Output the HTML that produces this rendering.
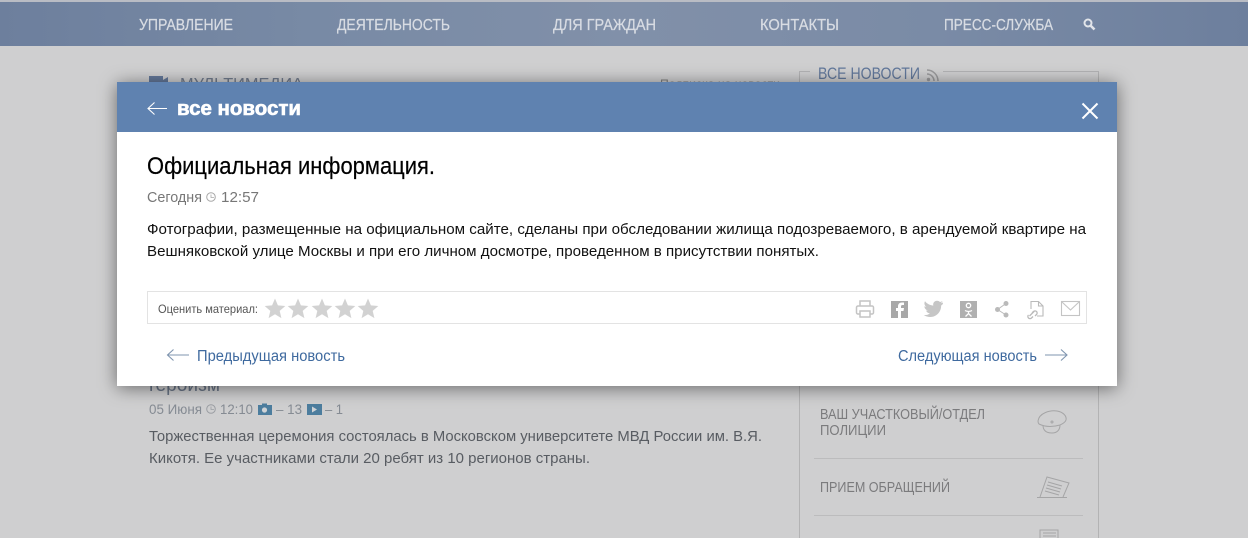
<!DOCTYPE html>
<html lang="ru"><head><meta charset="utf-8"><title>Официальная информация</title>
<style>
html,body{margin:0;padding:0;width:1248px;height:538px;overflow:hidden;background:#cfcfd0}
svg{display:block}
text{font-family:"Liberation Sans","DejaVu Sans",sans-serif}
</style></head><body>
<svg width="1248" height="538" viewBox="0 0 1248 538" xmlns="http://www.w3.org/2000/svg">
<defs>
<linearGradient id="nav" x1="0" x2="1" y1="0" y2="0">
<stop offset="0" stop-color="#6d7f9d"/><stop offset=".25" stop-color="#788aa5"/><stop offset=".5" stop-color="#8190a9"/><stop offset=".75" stop-color="#7a8ba6"/><stop offset="1" stop-color="#6d7f9d"/>
</linearGradient>
<filter id="sh" x="-5%" y="-15%" width="110%" height="130%"><feGaussianBlur stdDeviation="9"/></filter>
</defs>
<rect width="1248" height="538" fill="#cfcfd0"/>
<rect width="1248" height="2" fill="#b9bcc4"/>
<rect y="2" width="1248" height="44" fill="url(#nav)"/>
<g font-size="16" fill="#d8dce3" stroke="#d8dce3" stroke-width=".25">
<text x="139" y="30" textLength="94" lengthAdjust="spacingAndGlyphs">УПРАВЛЕНИЕ</text>
<text x="337" y="30" textLength="113" lengthAdjust="spacingAndGlyphs">ДЕЯТЕЛЬНОСТЬ</text>
<text x="553" y="30" textLength="103" lengthAdjust="spacingAndGlyphs">ДЛЯ ГРАЖДАН</text>
<text x="760" y="30" textLength="79" lengthAdjust="spacingAndGlyphs">КОНТАКТЫ</text>
<text x="944" y="30" textLength="109" lengthAdjust="spacingAndGlyphs">ПРЕСС-СЛУЖБА</text>
</g>
<circle cx="1088" cy="23" r="3.500" fill="none" stroke="#e2e5ea" stroke-width="2"/>
<path d="M1090.500 25.500l4 4" stroke="#e2e5ea" stroke-width="2.600"/>

<!-- background page -->
<rect x="149" y="76" width="14" height="12" fill="#64789a"/><path d="M163 80l5-3v10l-5-3z" fill="#64789a"/>
<text x="180" y="89" font-size="16" fill="#707a8c" textLength="123" lengthAdjust="spacingAndGlyphs">МУЛЬТИМЕДИА</text>
<text x="660" y="88" font-size="12" fill="#808080" textLength="120" lengthAdjust="spacingAndGlyphs">Подписка на новости</text>
<path d="M810 71.500H799.500V538M943 71.500H1098.500V538" fill="none" stroke="#b3b3b4"/>
<text x="818" y="79" font-size="16.500" fill="#62789b" textLength="102" lengthAdjust="spacingAndGlyphs">ВСЕ НОВОСТИ</text>
<g fill="none" stroke="#9a9a9c" stroke-width="1.500"><path d="M927 70a11 11 0 0 1 11 11M927 74a7 7 0 0 1 7 7"/></g><circle cx="928.500" cy="79.500" r="1.700" fill="#9a9a9c"/>

<text x="149" y="391" font-size="20" fill="#687486" textLength="71" lengthAdjust="spacingAndGlyphs">героизм</text>
<g font-size="14" fill="#858b93">
<text x="149" y="414" textLength="53" lengthAdjust="spacingAndGlyphs">05 Июня</text>
<text x="220" y="414" textLength="33" lengthAdjust="spacingAndGlyphs">12:10</text>
<text x="276" y="414" textLength="26" lengthAdjust="spacingAndGlyphs">– 13</text>
<text x="325" y="414" textLength="18" lengthAdjust="spacingAndGlyphs">– 1</text>
</g>
<circle cx="211" cy="409" r="4.300" fill="none" stroke="#9b9ea3"/><path d="M211 406.500V409.500H214" fill="none" stroke="#9b9ea3" stroke-width=".8"/>
<rect x="258" y="405" width="14" height="10" fill="#4c7d9e"/><rect x="262" y="403.500" width="5" height="2" fill="#4c7d9e"/><circle cx="264.500" cy="410" r="2.600" fill="#cfd3d6"/>
<rect x="307" y="404" width="15" height="11" fill="#4c7d9e"/><path d="M312 406.500l5 3-5 3z" fill="#cfd3d6"/>
<g font-size="15" fill="#585c62">
<text x="149" y="441" textLength="613" lengthAdjust="spacingAndGlyphs">Торжественная церемония состоялась в Московском университете МВД России им. В.Я.</text>
<text x="149" y="463" textLength="441" lengthAdjust="spacingAndGlyphs">Кикотя. Ее участниками стали 20 ребят из 10 регионов страны.</text>
</g>
<g font-size="14.500" fill="#7b7b7d">
<text x="820" y="419" textLength="165" lengthAdjust="spacingAndGlyphs">ВАШ УЧАСТКОВЫЙ/ОТДЕЛ</text>
<text x="820" y="435" textLength="66" lengthAdjust="spacingAndGlyphs">ПОЛИЦИИ</text>
<text x="820" y="492" textLength="130" lengthAdjust="spacingAndGlyphs">ПРИЕМ ОБРАЩЕНИЙ</text>
</g>
<path d="M814 458.500H1083M814 515.500H1083" stroke="#bcbcbd"/>
<g fill="none" stroke="#a5a5a6">
<path d="M1038 421c1-8 12-11 19-10 6 1 10 5 9 9-1 3-4 4-6 5-7 2-15 2-21-1-1-1-1-2-1-3z"/>
<path d="M1043 425c0 5 3 8 9 8 5 0 8-3 8-8"/>
<circle cx="1052" cy="422" r="1"/>
<path d="M1037 497.500H1067M1040 497l7-20 22 6-6 14M1048 482l14 4M1047 485l14 4M1046 488l14 4M1045 491l14 4"/>
<path d="M1040 538V530H1058V538M1043 533H1056M1043 536H1056"/>
</g>

<!-- modal -->
<rect x="117" y="84" width="1000" height="304" fill="#000" fill-opacity=".5" filter="url(#sh)"/>
<rect x="117" y="82" width="1000" height="304" fill="#fff"/>
<rect x="117" y="82" width="1000" height="50" fill="#5f82b0"/>
<path d="M167 108.500H148M154.500 102.500L148 108.500L154.500 114.500" fill="none" stroke="#fff" stroke-width="1.100"/>
<text x="177" y="115" font-size="20" font-weight="700" fill="#fff" stroke="#fff" stroke-width=".6" textLength="124" lengthAdjust="spacingAndGlyphs">все новости</text>
<path d="M1082.500 103.500L1097.500 118.500M1097.500 103.500L1082.500 118.500" stroke="#fff" stroke-width="2"/>

<text x="147" y="174" font-size="24" fill="#000" stroke="#000" stroke-width=".2" textLength="288" lengthAdjust="spacingAndGlyphs">Официальная информация.</text>
<text x="147" y="202" font-size="15" fill="#777" textLength="55" lengthAdjust="spacingAndGlyphs">Сегодня</text>
<circle cx="211" cy="197" r="4.300" fill="none" stroke="#a8a8a8"/><path d="M211 194.500V197.500H214" fill="none" stroke="#a8a8a8" stroke-width=".8"/>
<text x="221" y="202" font-size="15" fill="#777" textLength="38" lengthAdjust="spacingAndGlyphs">12:57</text>
<g font-size="15" fill="#111">
<text x="147" y="234" textLength="939" lengthAdjust="spacingAndGlyphs">Фотографии, размещенные на официальном сайте, сделаны при обследовании жилища подозреваемого, в арендуемой квартире на</text>
<text x="147" y="256" textLength="672" lengthAdjust="spacingAndGlyphs">Вешняковской улице Москвы и при его личном досмотре, проведенном в присутствии понятых.</text>
</g>

<rect x="147.500" y="291.500" width="939" height="32" fill="#fff" stroke="#e3e3e3"/>
<text x="158" y="313" font-size="12" fill="#555" textLength="100" lengthAdjust="spacingAndGlyphs">Оценить материал:</text>
<g fill="#d2d2d2">
<path transform="translate(-.5 0)" d="M275.500 298.500l2.900 6.900 7.400.6-5.600 4.900 1.700 7.200-6.400-3.900-6.400 3.900 1.700-7.200-5.600-4.900 7.400-.6z"/>
<path transform="translate(22.500 0)" d="M275.500 298.500l2.900 6.900 7.400.6-5.600 4.900 1.700 7.200-6.400-3.900-6.400 3.900 1.700-7.200-5.600-4.900 7.400-.6z"/>
<path transform="translate(46.500 0)" d="M275.500 298.500l2.900 6.900 7.400.6-5.600 4.900 1.700 7.200-6.400-3.900-6.400 3.900 1.700-7.200-5.600-4.900 7.400-.6z"/>
<path transform="translate(69.500 0)" d="M275.500 298.500l2.900 6.900 7.400.6-5.600 4.900 1.700 7.200-6.400-3.900-6.400 3.900 1.700-7.200-5.600-4.900 7.400-.6z"/>
<path transform="translate(92.500 0)" d="M275.500 298.500l2.900 6.900 7.400.6-5.600 4.900 1.700 7.200-6.400-3.900-6.400 3.900 1.700-7.200-5.600-4.900 7.400-.6z"/>
</g>
<!-- print -->
<g fill="none" stroke="#c4c4c4" stroke-width="1.500">
<path d="M860 306V301H870V306M860 314H858a1.500 1.500 0 0 1-1.500-1.500V307.500A1.500 1.500 0 0 1 858 306H872a1.500 1.500 0 0 1 1.500 1.500V312.500A1.500 1.500 0 0 1 872 314H870"/>
<rect x="860" y="311" width="10" height="6"/>
</g>
<!-- facebook -->
<rect x="891" y="301" width="17" height="17" fill="#a8a8a8"/>
<path d="M901 318V311H903.500L904 308H901V306.500C901 305.500 901.500 305 902.500 305H904V302.500H902C899.500 302.500 898 304 898 306.300V308H896V311H898V318z" fill="#fff"/>
<!-- twitter -->
<path d="M943 302.500c-.7.300-1.500.6-2.300.7.800-.5 1.500-1.300 1.800-2.200-.8.500-1.600.8-2.600 1-1.700-1.800-4.600-1.500-6 .3-.7 1-.9 2.200-.6 3.300-3.400-.2-6.300-1.800-8.300-4.300-1.100 1.900-.6 4.300 1.300 5.500-.7 0-1.300-.2-1.900-.5 0 2 1.400 3.700 3.400 4.100-.6.200-1.200.2-1.800.1.600 1.700 2.100 2.800 3.900 2.900-1.800 1.400-4 2-6.100 1.700 6 3.800 13.700 1.800 16.500-5 .6-1.500.9-3 .8-4.500.9-.6 1.600-1.300 1.900-2.100z" fill="#c6c6c6"/>
<!-- ok -->
<rect x="960" y="301" width="17" height="17" fill="#b0b0b0"/>
<g fill="none" stroke="#fff" stroke-width="1.300"><circle cx="968.500" cy="305.500" r="2.200"/><path d="M965 310.500c2 1.300 5 1.300 7 0M968.500 311.500V313M965.500 316.500L968.500 313.500L971.500 316.500"/></g>
<!-- share -->
<g fill="#bababa"><circle cx="997.500" cy="309.500" r="2.500"/><circle cx="1006" cy="303.500" r="2.500"/><circle cx="1006" cy="315" r="2.500"/></g>
<path d="M1006 303.500L997.500 309.500L1006 315" fill="none" stroke="#bababa"/>
<!-- doc link -->
<g fill="none" stroke="#bababa" stroke-width="1.100">
<path d="M1031 309V301.500H1038.500L1043 306V316H1037"/><path d="M1038.500 301.500V306H1043"/>
<path d="M1029.500 316L1034.500 311M1028.500 315a2 2 0 0 0 3 3L1033 316.500M1032 313L1033.500 311.500a2 2 0 0 1 3 3L1035 316" stroke-width="1.300"/>
</g>
<!-- mail -->
<g fill="none" stroke="#c4c4c4" stroke-width="1.100"><rect x="1061.500" y="301.500" width="18" height="14"/><path d="M1062 302L1070.500 310L1079 302"/></g>

<path d="M189 355H167.500M173.500 349.500L167.500 355L173.500 360.500" fill="none" stroke="#7f95af" stroke-width="1.100"/>
<text x="197" y="361" font-size="15.500" fill="#3f6a9f" textLength="148" lengthAdjust="spacingAndGlyphs">Предыдущая новость</text>
<text x="898" y="361" font-size="15.500" fill="#3f6a9f" textLength="139" lengthAdjust="spacingAndGlyphs">Следующая новость</text>
<path d="M1045 355H1067M1061 349.500L1067 355L1061 360.500" fill="none" stroke="#7f95af" stroke-width="1.100"/>
</svg>
</body></html>
